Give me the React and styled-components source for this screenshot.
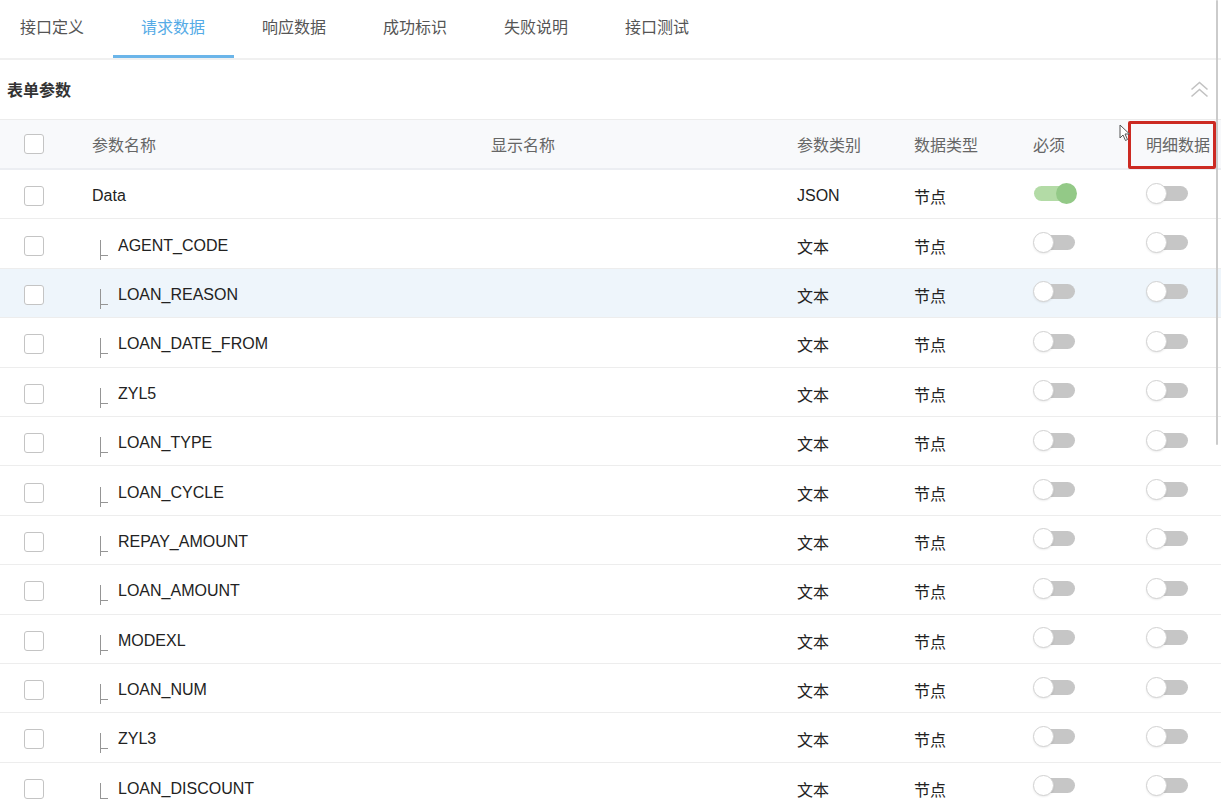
import React from "react";
import styled, { createGlobalStyle } from "styled-components";

const Global = createGlobalStyle`
  html, body { margin: 0; padding: 0; background: #fff; overflow: hidden; }
  body { font-family: "Liberation Sans", "Noto Sans CJK SC", Arial, sans-serif; color: #333; }
`;

const Page = styled.div`
  position: relative;
  width: 1221px;
  height: 805px;
  overflow: hidden;
  background: #fff;
`;

const Tabs = styled.div`
  display: flex;
  height: 58px;
  border-bottom: 2px solid #f0f0f0;
  box-sizing: content-box;
`;

const Tab = styled.div`
  position: relative;
  display: flex;
  align-items: center;
  height: 100%;
  padding: 0 28.5px 6px;
  box-sizing: border-box;
  font-size: 16px;
  color: ${(p) => (p.$active ? "#55abe6" : "#555")};
  &:first-child { padding-left: 20px; }
  &::after {
    content: "";
    display: ${(p) => (p.$active ? "block" : "none")};
    position: absolute;
    left: 0;
    right: 0;
    bottom: 0;
    height: 3px;
    background: #6bb5e9;
  }
`;

const Section = styled.div`
  display: flex;
  align-items: center;
  justify-content: space-between;
  height: 60px;
  padding: 0 12px 2px 7px;
  box-sizing: border-box;
  border-bottom: 1px solid #ececec;
  font-size: 16px;
  font-weight: bold;
  color: #333;
`;

const Chevrons = styled.svg`
  display: block;
  margin-top: 2px;
`;

const cols = "92px 399px 306px 117px 119px 113px 1fr";

const HeadRow = styled.div`
  display: grid;
  grid-template-columns: ${cols};
  align-items: center;
  height: 50px;
  background: #f8f9fb;
  border-bottom: 2px solid #eceef2;
  box-sizing: border-box;
  font-size: 16px;
  color: #666;
`;

const Row = styled.div`
  display: grid;
  grid-template-columns: ${cols};
  align-items: center;
  height: 49.4px;
  padding-top: 4px;
  background: ${(p) => (p.$active ? "#eef5fb" : "#fff")};
  border-bottom: 1px solid #ededed;
  box-sizing: border-box;
  font-size: 16px;
  color: #222;
`;

const CheckCell = styled.div`
  display: flex;
  align-items: center;
  padding-left: 24px;
  height: 100%;
`;

const Checkbox = styled.span`
  display: block;
  width: 18px;
  height: 18px;
  border: 1px solid #c4c4c4;
  border-radius: 3px;
  background: #fff;
`;

const Cell = styled.div`
  position: relative;
  display: flex;
  align-items: center;
  height: 100%;
  white-space: nowrap;
`;

const Connector = styled.span`
  position: relative;
  align-self: stretch;
  width: 26px;
  flex: none;
  &::before {
    content: "";
    position: absolute;
    left: 8px;
    top: calc(50% - 6px);
    width: 1px;
    height: ${(p) => (p.$last ? "16px" : "20px")};
    background: #959595;
  }
  &::after {
    content: "";
    position: absolute;
    left: 8px;
    top: calc(50% + 9px);
    width: 8px;
    height: 1px;
    background: #959595;
  }
`;

const Switch = styled.span`
  position: relative;
  display: block;
  width: 43px;
  height: 21px;
  margin-top: -6px;
  &::before {
    content: "";
    position: absolute;
    left: ${(p) => (p.$on ? "1px" : "6px")};
    right: ${(p) => (p.$on ? "6px" : "1px")};
    top: 3px;
    height: 15px;
    border-radius: 8px;
    background: ${(p) => (p.$on ? "#b3dba6" : "#c6c6c6")};
  }
  &::after {
    content: "";
    position: absolute;
    top: 0;
    left: ${(p) => (p.$on ? "23px" : "0")};
    width: ${(p) => (p.$on ? "21px" : "19px")};
    height: ${(p) => (p.$on ? "21px" : "19px")};
    border-radius: 50%;
    background: ${(p) => (p.$on ? "#93c987" : "#fff")};
    border: ${(p) => (p.$on ? "none" : "1px solid #d2d2d2")};
    box-shadow: ${(p) => (p.$on ? "none" : "0 1px 2px rgba(0,0,0,0.08)")};
  }
`;

const Highlight = styled.span`
  position: absolute;
  left: -18px;
  right: 5px;
  top: 1px;
  bottom: -1px;
  border: 3px solid #cc2a22;
  border-radius: 2px;
  pointer-events: none;
`;

const Scrollbar = styled.div`
  position: absolute;
  top: 0;
  right: 3px;
  width: 2px;
  height: 445px;
  border-radius: 2px;
  background: #cbcbcb;
`;

const Cursor = styled.svg`
  position: absolute;
  left: 1119px;
  top: 124px;
`;

const tabs = ["接口定义", "请求数据", "响应数据", "成功标识", "失败说明", "接口测试"];

const rows = [
  { name: "Data", cat: "JSON", root: true, req: true },
  { name: "AGENT_CODE" },
  { name: "LOAN_REASON", active: true },
  { name: "LOAN_DATE_FROM" },
  { name: "ZYL5" },
  { name: "LOAN_TYPE" },
  { name: "LOAN_CYCLE" },
  { name: "REPAY_AMOUNT" },
  { name: "LOAN_AMOUNT" },
  { name: "MODEXL" },
  { name: "LOAN_NUM" },
  { name: "ZYL3" },
  { name: "LOAN_DISCOUNT", last: true },
];

export default function App() {
  return (
    <Page>
      <Global />
      <Tabs>
        {tabs.map((t, i) => (
          <Tab key={t} $active={i === 1}>{t}</Tab>
        ))}
      </Tabs>
      <Section>
        <span>表单参数</span>
        <Chevrons width="19" height="17" viewBox="0 0 19 17">
          <polyline points="1.5,8.5 9.5,1.5 17.5,8.5" fill="none" stroke="#c2c2c2" strokeWidth="1.6" />
          <polyline points="1.5,15.5 9.5,8.5 17.5,15.5" fill="none" stroke="#c2c2c2" strokeWidth="1.6" />
        </Chevrons>
      </Section>
      <HeadRow>
        <CheckCell><Checkbox /></CheckCell>
        <Cell>参数名称</Cell>
        <Cell>显示名称</Cell>
        <Cell>参数类别</Cell>
        <Cell>数据类型</Cell>
        <Cell>必须</Cell>
        <Cell>
          明细数据
          <Highlight />
        </Cell>
      </HeadRow>
      {rows.map((r) => (
        <Row key={r.name} $active={r.active}>
          <CheckCell><Checkbox /></CheckCell>
          <Cell>
            {!r.root && <Connector $last={r.last} />}
            {r.name}
          </Cell>
          <Cell />
          <Cell>{r.cat || "文本"}</Cell>
          <Cell>节点</Cell>
          <Cell><Switch $on={r.req} /></Cell>
          <Cell><Switch /></Cell>
        </Row>
      ))}
      <Scrollbar />
      <Cursor width="12" height="18" viewBox="0 0 12 18">
        <path d="M1 1 L1 14 L4 11 L6.5 16.5 L8.5 15.5 L6 10 L10.5 10 Z" fill="#fff" stroke="#555" strokeWidth="1" strokeLinejoin="round" />
      </Cursor>
    </Page>
  );
}
